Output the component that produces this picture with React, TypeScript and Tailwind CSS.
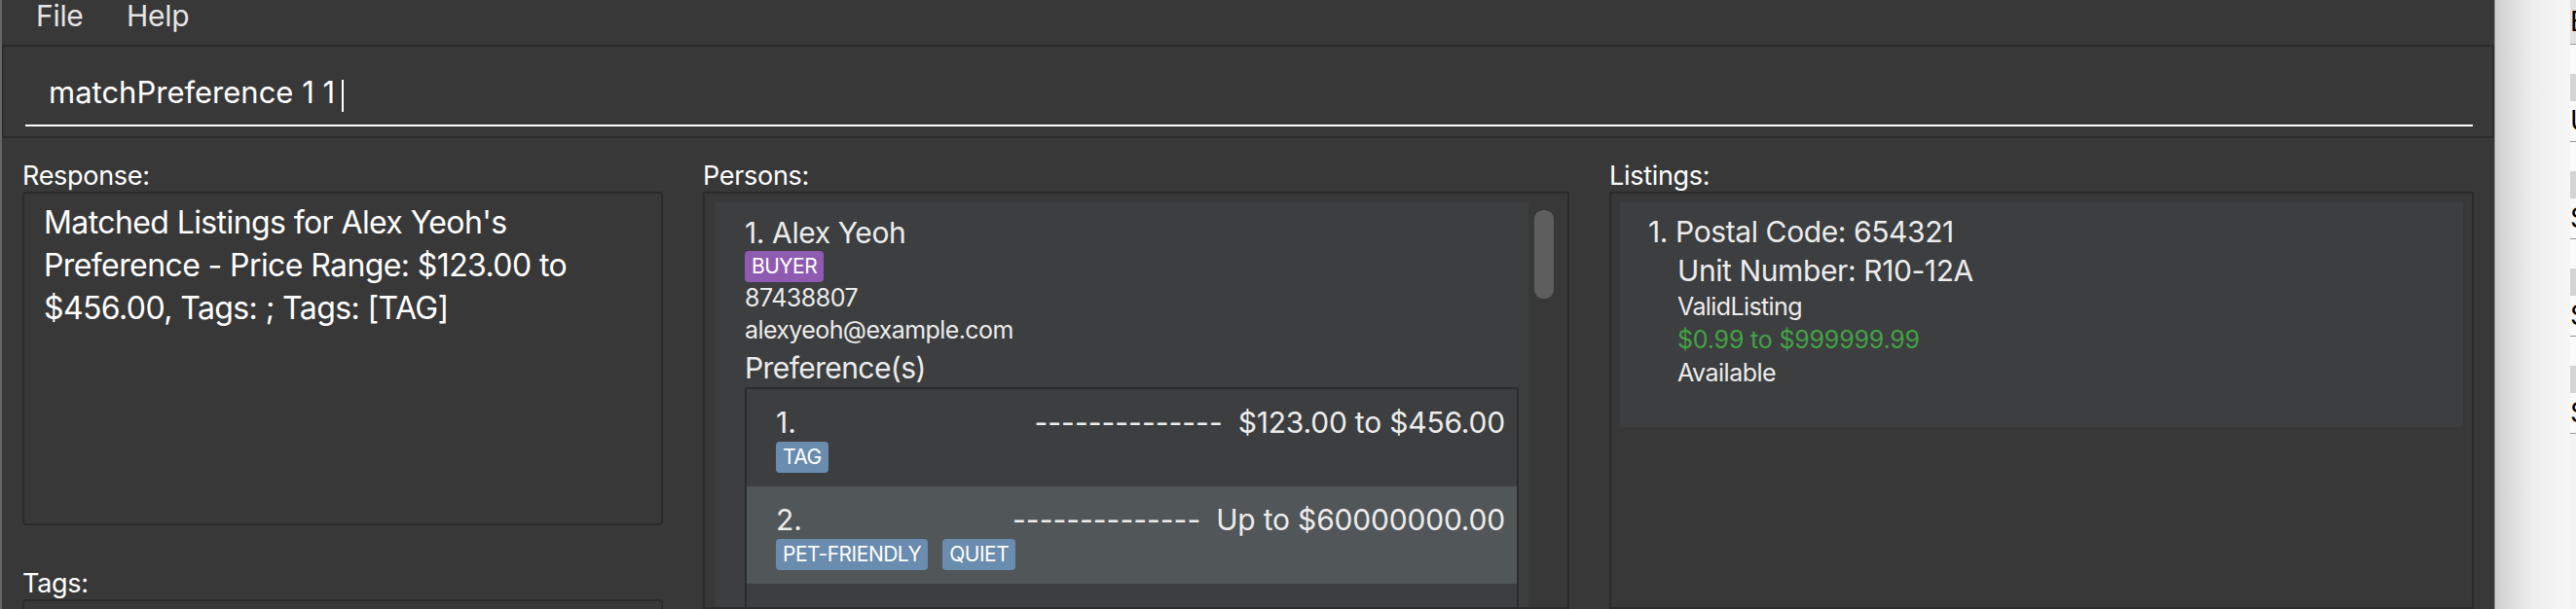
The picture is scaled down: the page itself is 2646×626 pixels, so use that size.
import React from "react";

function Badge({ children, purple }: { children: React.ReactNode; purple?: boolean }) {
  return (
    <span
      className={
        "inline-flex h-[32px] items-center rounded-[4px] px-[7px] text-[21px] leading-[32px] tracking-[-0.5px] text-white " +
        (purple ? "bg-[#8e5bb1]" : "bg-[#6a8cae]")
      }
    >
      {children}
    </span>
  );
}

function PrefRow({
  idx,
  price,
  tags,
  odd,
}: {
  idx: string;
  price: string;
  tags: string[];
  odd?: boolean;
}) {
  return (
    <div className={"h-[100px] shrink-0 pl-[30px] pr-[12px] pt-[16px] " + (odd ? "bg-[#515658]" : "")}>
      <div className="flex justify-between text-[30px] leading-[36px] text-[#ececec]">
        <span>{idx}</span>
        <span className="flex gap-[16px]">
          <span>--------------</span>
          <span className="tracking-[-0.2px]">{price}</span>
        </span>
      </div>
      <div className="mt-[2px] flex gap-[15px]">
        {tags.map((t) => (
          <Badge key={t}>{t}</Badge>
        ))}
      </div>
    </div>
  );
}

function StripRow({ letter }: { letter?: string }) {
  return (
    <>
      <div className="h-[30px] shrink-0 bg-[#fafafa]" />
      <div className="h-[28px] shrink-0 bg-[#d4d4d4]" />
      <div className="h-[41px] shrink-0 bg-[#fafafa] text-[28px] leading-[41px] text-black">{letter}</div>
      <div className="h-[1px] shrink-0 bg-[#9a9a9a]" />
    </>
  );
}

export default function App() {
  return (
    <div className="flex h-[626px] w-[2646px] overflow-hidden bg-[#f3f3f3] font-['Inter',sans-serif]">
      <div className="flex h-full w-[2562px] shrink-0 flex-col border-l-2 border-[#666666] bg-[#383838]">
        {/* menu bar */}
        <div className="flex h-[46px] shrink-0 items-start pl-[35px] text-[30px] leading-[32px] tracking-[-0.3px] text-[#e4e4e4]">
          <span className="w-[93px]">File</span>
          <span>Help</span>
        </div>

        {/* command box */}
        <div className="h-[96px] shrink-0 border-2 border-[#2b2b2b] pl-[22px] pr-[20px]">
          <div className="flex h-[82px] items-start border-b-2 border-white pl-[24px] pt-[27px]">
            <span className="text-[31px] leading-[40px] text-white">matchPreference 1 1</span>
            <span className="ml-[7px] mt-[7px] h-[33px] w-[2px] bg-white" />
          </div>
        </div>

        {/* main */}
        <div className="flex min-h-0 flex-1 gap-[41px] pl-[21px]">
          {/* left */}
          <div className="flex w-[658px] shrink-0 flex-col">
            <div className="pt-[22px] text-[27px] leading-[33px] tracking-[-0.3px] text-white">Response:</div>
            <div className="h-[343px] shrink-0 rounded-[4px] border-2 border-[#2b2b2b] pl-[20px] pt-[8px] text-[32px] leading-[44px] tracking-[-0.6px] text-white">
              <div>Matched Listings for Alex Yeoh's</div>
              <div>Preference - Price Range: $123.00 to</div>
              <div>$456.00, Tags: ; Tags: [TAG]</div>
            </div>
            <div className="mt-[43px] text-[27px] leading-[33px] tracking-[-0.3px] text-white">Tags:</div>
            <div className="h-[80px] shrink-0 rounded-[4px] border-2 border-[#2b2b2b]" />
          </div>

          {/* middle */}
          <div className="flex w-[890px] shrink-0 flex-col">
            <div className="pt-[22px] text-[27px] leading-[33px] tracking-[-0.3px] text-white">Persons:</div>
            <div className="flex min-h-0 flex-1 border-2 border-[#2b2b2b] pl-[10px] pt-[9px]">
              <div className="w-[836px] shrink-0 bg-[#3c3e3f] pl-[31px] pr-[10px] pt-[13px] text-[#ececec]">
                <div className="text-[30px] leading-[36px] tracking-[-0.4px]">1. Alex Yeoh</div>
                <div className="mt-[1px] flex">
                  <Badge purple>BUYER</Badge>
                </div>
                <div className="text-[25px] leading-[33px] tracking-[-0.5px]">87438807</div>
                <div className="text-[25px] leading-[33px] tracking-[-0.6px]">alexyeoh@example.com</div>
                <div className="mt-[4px] text-[30px] leading-[36px] tracking-[-0.6px]">Preference(s)</div>
                <div className="mt-[2px] flex flex-col border-2 border-[#2b2b2b]">
                  <PrefRow idx="1." price="$123.00 to $456.00" tags={["TAG"]} />
                  <PrefRow idx="2." price="Up to $60000000.00" tags={["PET-FRIENDLY", "QUIET"]} odd />
                  <div className="h-[100px] shrink-0" />
                </div>
              </div>
              <div className="flex flex-1 flex-col pl-[6px] pt-[8px]">
                <div className="h-[91px] w-[20px] rounded-[9px] bg-[#5e5e5e]" />
              </div>
            </div>
          </div>

          {/* right */}
          <div className="flex w-[888px] shrink-0 flex-col">
            <div className="pt-[22px] text-[27px] leading-[33px] tracking-[-0.3px] text-white">Listings:</div>
            <div className="min-h-0 flex-1 border-2 border-[#2b2b2b] px-[9px] pt-[9px]">
              <div className="h-[231px] bg-[#3c3e3f] pl-[29px] pt-[10px] text-[#ececec]">
                <div className="text-[30px] leading-[40px] tracking-[-0.4px]">1. Postal Code: 654321</div>
                <div className="pl-[30px]">
                  <div className="text-[30px] leading-[40px] tracking-[-0.4px]">Unit Number: R10-12A</div>
                  <div className="text-[25px] leading-[34px] tracking-[-0.6px]">ValidListing</div>
                  <div className="text-[25px] leading-[34px] tracking-[-0.2px] text-[#45a147]">$0.99 to $999999.99</div>
                  <div className="text-[25px] leading-[34px] tracking-[-0.5px]">Available</div>
                </div>
              </div>
            </div>
          </div>
        </div>
      </div>

      {/* background window edge */}
      <div className="flex h-full flex-1">
        <div className="w-[1px] shrink-0 bg-[#8a8a8a]" />
        <div className="flex-1 bg-linear-to-r from-[#cfcfcf] via-[#eeeeee] to-[#f6f6f6]" />
        <div className="flex w-[6px] shrink-0 flex-col overflow-hidden bg-[#f4f4f4] leading-none">
          <div className="h-[45px] shrink-0 bg-[#e2e2e2] text-[28px] leading-[45px] text-black">E</div>
          <div className="h-[1px] shrink-0 bg-[#9a9a9a]" />
          <StripRow letter="U" />
          <StripRow letter="S" />
          <StripRow letter="S" />
          <StripRow letter="S" />
        </div>
      </div>
    </div>
  );
}
